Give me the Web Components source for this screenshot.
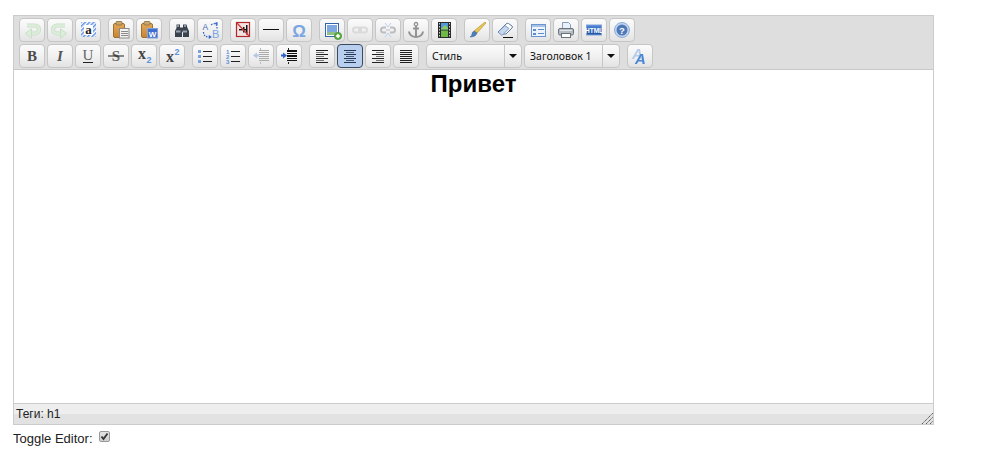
<!DOCTYPE html>
<html lang="ru"><head><meta charset="utf-8"><title>Editor</title>
<style>
html,body{margin:0;background:#fff}
body{padding:15px 0 0 13px;font:12px "Liberation Sans",Arial,sans-serif;color:#222;width:984px;height:446px;box-sizing:border-box;overflow:hidden}
</style></head><body>
<mce-editor>
  <tb-row>
    <tb-group><tb-btn icon="undo"></tb-btn><tb-btn icon="redo"></tb-btn><tb-btn icon="selectall"></tb-btn></tb-group>
    <tb-group><tb-btn icon="paste"></tb-btn><tb-btn icon="pasteword"></tb-btn></tb-group>
    <tb-group><tb-btn icon="find"></tb-btn><tb-btn icon="replace"></tb-btn></tb-group>
    <tb-group><tb-btn icon="nbsp"></tb-btn><tb-btn icon="hr"></tb-btn><tb-btn icon="omega"></tb-btn></tb-group>
    <tb-group><tb-btn icon="image"></tb-btn><tb-btn icon="link"></tb-btn><tb-btn icon="unlink"></tb-btn><tb-btn icon="anchor"></tb-btn><tb-btn icon="media"></tb-btn></tb-group>
    <tb-group><tb-btn icon="brush"></tb-btn><tb-btn icon="eraser"></tb-btn></tb-group>
    <tb-group><tb-btn icon="form"></tb-btn><tb-btn icon="print"></tb-btn><tb-btn icon="html"></tb-btn><tb-btn icon="help"></tb-btn></tb-group>
  </tb-row>
  <tb-row>
    <tb-group><tb-btn icon="bold"></tb-btn><tb-btn icon="italic"></tb-btn><tb-btn icon="underline"></tb-btn><tb-btn icon="strike"></tb-btn><tb-btn icon="sub"></tb-btn><tb-btn icon="sup"></tb-btn></tb-group>
    <tb-group><tb-btn icon="ul"></tb-btn><tb-btn icon="ol"></tb-btn><tb-btn icon="outdent"></tb-btn><tb-btn icon="indent"></tb-btn></tb-group>
    <tb-group><tb-btn icon="left"></tb-btn><tb-btn icon="center" active></tb-btn><tb-btn icon="right"></tb-btn><tb-btn icon="justify"></tb-btn></tb-group>
    <tb-group><tb-select>Стиль</tb-select><tb-select>Заголовок 1</tb-select></tb-group>
    <tb-group><tb-btn icon="font"></tb-btn></tb-group>
  </tb-row>
  <h1 slot="content">Привет</h1>
  <span slot="status">Теги: h1</span>
</mce-editor>
<toggle-line>Toggle Editor:</toggle-line>
<script>
const lines=(rows,c='#222')=>rows.map(([x,y,w,col])=>`<rect x="${x}" y="${y}" width="${w}" height="1" fill="${col||c}"/>`).join('');
const rng=(x,w,ys,c)=>lines(ys.map(y=>[x,y,w]),c);
const T=(x,y,s,t,a='')=>`<text x="${x}" y="${y}" font-size="${s}" ${a}>${t}</text>`;
const SERIF='font-family="Liberation Serif,serif"';
const SANS='font-family="Liberation Sans,sans-serif"';
const dots=(x,ys,c='#7aa2dc')=>ys.map(y=>`<rect x="${x}" y="${y}" width="3" height="3" fill="${c}"/>`).join('');
const clip=`<defs><linearGradient id="o" x1="0" y1="0" x2="0" y2="1"><stop offset="0" stop-color="#e2a95a"/><stop offset="1" stop-color="#c98432"/></linearGradient></defs><rect x="2.500" y="3.500" width="11" height="14" rx="1.500" fill="url(#o)" stroke="#a0702f"/><rect x="5" y="1.500" width="6" height="3.500" rx="1" fill="#c9a773" stroke="#8a6a3a" stroke-width=".8"/>`;
const curve=`<path d="M5 5.500h8a4 4 0 0 1 0 8H8" fill="none" stroke="#c8e0c8" stroke-width="4.200"/><path d="M5 5.500h8a4 4 0 0 1 0 8H8" fill="none" stroke="#dcedd9" stroke-width="2.600"/><path d="M9.500 8.800v9.400L3.300 13.500z" fill="#dcedd9" stroke="#c8e0c8"/>`;
const ICONS={
undo:curve,
redo:`<g transform="matrix(-1 0 0 1 20 0)">${curve}</g>`,
selectall:`<defs><pattern id="h" width="3" height="3" patternUnits="userSpaceOnUse" patternTransform="rotate(45)"><rect width="3" height="3" fill="#fff"/><rect width="1.500" height="3" fill="#5c8fe6"/></pattern></defs><rect x="3" y="2" width="15" height="15" fill="url(#h)"/><rect x="6" y="5" width="9" height="10" fill="#fff"/>`+T(10.5,14,13,'a',SERIF+' font-weight="bold" text-anchor="middle" fill="#222"'),
paste:clip+`<rect x="8.500" y="8.500" width="9.500" height="9.500" fill="#f2f2f0" stroke="#8b8b8b"/>`+rng(10,7,[11,13,15],'#8a8a8a'),
pasteword:clip+`<rect x="8.500" y="8.500" width="10" height="9.500" fill="#3e6fd0" stroke="#86a0d8"/>`+T(13.5,16.500,8,'W',SANS+' font-weight="bold" text-anchor="middle" fill="#fff"'),
find:`<path d="M4.500 4.500h3.500v3h3v-3h3.500l1 3.500 1.500 3v6h-6v-5h-1v5H3v-6l1.500-3z" fill="#39434d"/><rect x="4" y="10.500" width="4.500" height="2" fill="#98a4b0"/><rect x="10.500" y="10.500" width="4.500" height="2" fill="#98a4b0"/><rect x="5" y="5" width="2" height="2" fill="#8b97a3"/><rect x="12" y="5" width="2" height="2" fill="#8b97a3"/>`,
replace:T(2.500,10,8.500,'A',SANS+' fill="#3f68b4"')+T(12,18,11,'B',SANS+' fill="#7ba4e0"')+`<path d="M11 5q4-3 6 1v3M3.500 12q0 5 6 5" fill="none" stroke="#2f62c8" stroke-width="1.200" stroke-dasharray="1.500 1.200"/><path d="M14.500 3l3-1v3.500zM8.800 15l3 2-3 2z" fill="#2f62c8"/>`,
nbsp:`<rect x="3.500" y="2.500" width="13" height="14" fill="#f3e2e2" stroke="#b02a2a" stroke-width="1.200"/><rect x="6" y="9" width="8" height="1.400" fill="#111"/><rect x="10" y="7" width="1.500" height="5.500" fill="#111"/><rect x="13" y="5" width="1.500" height="9.500" fill="#111"/><path d="M4 3l12 13" stroke="#cc3a3e" stroke-width="1.300"/>`,
hr:`<rect x="2" y="9" width="16" height="1" fill="#111"/>`,
omega:T(10,16.500,17,'Ω',SANS+' font-weight="bold" text-anchor="middle" fill="#7aa6e2"'),
image:`<rect x="3.500" y="3.500" width="13" height="13" fill="#fff" stroke="#3564a8"/><rect x="5" y="5" width="10" height="7" fill="#7fa8e0"/><rect x="5" y="12" width="10" height="3" fill="#8fc08a"/><circle cx="16" cy="16" r="3.600" fill="#5fae45" stroke="#3f8a2e" stroke-width=".7"/><path d="M14 16h4M16 14v4" stroke="#fff" stroke-width="1.400"/>`,
link:`<g fill="none" stroke="#dadada" stroke-width="2"><rect x="3" y="7.500" width="8" height="5" rx="2.500"/><rect x="9" y="7.500" width="8" height="5" rx="2.500"/></g>`,
unlink:`<g fill="none" stroke="#bcbcc4" stroke-width="2"><path d="M8 7.500H5.500a2.500 2.500 0 0 0 0 5H8M12 7.500h2.500a2.500 2.500 0 0 1 0 5H12"/></g><path d="M7 3l3 4 3-4M7 17l3-4 3 4" fill="none" stroke="#bcd0ee"/><path d="M8 10h4" stroke="#bcbcc4"/>`,
anchor:`<g fill="none" stroke="#939393" stroke-width="2"><circle cx="10" cy="4.200" r="1.700" stroke-width="1.300"/><path d="M10 6v11M7 8.500h6"/><path d="M3 11.500q.5 5 7 5.500 6.500-.5 7-5.500"/></g>`,
media:`<rect x="4" y="2" width="13" height="16" fill="#2a2a2a"/><rect x="7" y="3" width="7" height="6.500" fill="#4f9ad8"/><rect x="7" y="10.500" width="7" height="6.500" fill="#6fb84a"/><path d="M7 9l4-4 3 3v1.500H7z" fill="#8acb62"/>`+[3,6,9,12,15].map(y=>`<rect x="5" y="${y}" width="1" height="1.500" fill="#ccc"/><rect x="15" y="${y}" width="1" height="1.500" fill="#ccc"/>`).join(''),
brush:`<path d="M18 2l1 1-9 10-3-2z" fill="#e8c455" stroke="#b08f2a" stroke-width=".6"/><path d="M7 11l3 2q-1 4-7 4 2-1 2-3t2-3z" fill="#4d7fb8" stroke="#39608e" stroke-width=".5"/>`,
eraser:`<path d="M3 12l8-8q1-1 2.500-.5l3.500 2.500q1 1 0 2l-6 6H7z" fill="#fff" stroke="#5d7ca6"/><path d="M3 12l4 3.500 7-7-4-3z" fill="#c4d8f0" stroke="#5d7ca6" stroke-width=".7"/><rect x="8" y="17" width="10" height="1" fill="#111"/>`,
form:`<rect x="3.500" y="4.500" width="14" height="12" fill="#eef4fc" stroke="#6b93cc"/><rect x="4" y="5" width="13" height="2" fill="#a6c2e8"/><rect x="5" y="9" width="3" height="2" fill="#5e8ccb"/><rect x="5" y="13" width="3" height="2" fill="#5e8ccb"/><rect x="10" y="9" width="6" height="1" fill="#5e8ccb"/><rect x="10" y="13" width="6" height="1" fill="#5e8ccb"/>`,
print:`<path d="M6.500 2.500h6l2 2v5h-8z" fill="#e8f0fb" stroke="#8a9cb6"/><rect x="2.500" y="8.500" width="15" height="6.500" rx="1.500" fill="#b6bcc4" stroke="#6a727c"/><rect x="5.500" y="13.500" width="9" height="4" fill="#fff" stroke="#6a727c"/><rect x="4" y="10" width="12" height="1" fill="#e3e6ea"/>`,
html:`<defs><linearGradient id="b" x1="0" y1="0" x2="0" y2="1"><stop offset="0" stop-color="#4f86d8"/><stop offset="1" stop-color="#1f4f9f"/></linearGradient></defs><rect x="2.500" y="5" width="15" height="10" fill="url(#b)" stroke="#7ea2d8"/>`+T(10,12.500,6.500,'HTML',SANS+' font-weight="bold" text-anchor="middle" fill="#fff"'),
help:`<circle cx="10" cy="10" r="7.500" fill="#c4d6ef" stroke="#8facd6"/><circle cx="10" cy="10" r="5.500" fill="#4f78b8"/>`+T(10,13.500,9.500,'?',SANS+' font-weight="bold" text-anchor="middle" fill="#fff"'),
bold:T(10,15,15,'B',SERIF+' font-weight="bold" text-anchor="middle" fill="#4a4a4a"'),
italic:T(10,15,15,'I',SERIF+' font-weight="bold" font-style="italic" text-anchor="middle" fill="#555"'),
underline:T(10,14,15,'U',SERIF+' text-anchor="middle" fill="#666"')+`<rect x="5" y="16" width="10" height="1" fill="#222"/>`,
strike:T(10,15,15,'S',SERIF+' font-weight="bold" text-anchor="middle" fill="#666"')+`<rect x="2" y="9.500" width="16" height="1" fill="#222"/>`,
sub:T(8,13,16,'x',SERIF+' font-weight="bold" text-anchor="middle" fill="#444"')+T(15,17,9,'2',SANS+' font-weight="bold" text-anchor="middle" fill="#5b93dc"'),
sup:T(8,16,16,'x',SERIF+' font-weight="bold" text-anchor="middle" fill="#444"')+T(15,9,9,'2',SANS+' font-weight="bold" text-anchor="middle" fill="#5b93dc"'),
ul:dots(3,[4,9,14])+rng(8,9,[5,10,15]),
ol:T(3,8,6,'1',SANS+' font-weight="bold" fill="#5b8fd8"')+T(3,13,6,'2',SANS+' font-weight="bold" fill="#5b8fd8"')+T(3,18,6,'3',SANS+' font-weight="bold" fill="#5b8fd8"')+rng(8,9,[5,10,15]),
outdent:`<path d="M2 9.500l4-3v2h2v2H6v2z" fill="#b4c8e4"/>`+rng(8,10,[4,6,8,10,12,14],'#aaa')+rng(9,1,[2,3,16,17],'#bbb'),
indent:`<path d="M8 9.500l-4-3v2H2v2h2v2z" fill="#2f62c8"/>`+`<rect x="8" y="4" width="10" height="2" fill="#111"/><rect x="8" y="7" width="10" height="1" fill="#111"/><rect x="8" y="9" width="10" height="2" fill="#111"/><rect x="8" y="12" width="10" height="1" fill="#111"/><rect x="8" y="14" width="10" height="1" fill="#111"/>`+rng(9,1,[2,3,16,17],'#222'),
left:rng(4,12,[4,8,12,16],'#222')+rng(4,8,[6,10,14],'#777'),
center:rng(4,12,[4,8,12,16],'#24364f')+rng(6,8,[6,10,14],'#4a5d78'),
right:rng(4,12,[4,8,12,16],'#222')+rng(8,8,[6,10,14],'#777'),
justify:rng(4,12,[4,6,8,10,12,14,16],'#222'),
font:`<text x="5" y="18" font-size="15" ${SANS} font-weight="bold" font-style="italic" fill="#4a86d4" style="filter:drop-shadow(-3px -5px 0 #b4cbea)">A</text>`
};
const simple=(name,css)=>customElements.define(name,class extends HTMLElement{constructor(){super();this.attachShadow({mode:'open'}).innerHTML=`<style>${css}</style><slot></slot>`}});
simple('tb-row',':host{display:flex;height:26px;padding-left:5px}');
simple('tb-group',':host{display:flex;gap:2px;margin-right:7px}');
customElements.define('tb-btn',class extends HTMLElement{connectedCallback(){
 if(this.shadowRoot)return;
 this.attachShadow({mode:'open'}).innerHTML=`<style>
 :host{display:flex;align-items:center;justify-content:center;box-sizing:border-box;width:26px;height:24px;border:1px solid #c6c6c6;border-radius:4px;background:linear-gradient(#fbfbfb,#f1f1f1 50%,#e3e3e3)}
 :host([active]){background:#b8cff0;border-color:#3b4a5e}
 svg{display:block;width:20px;height:20px;flex:none;overflow:visible}
 </style><svg viewBox="0 0 20 20" aria-hidden="true">${ICONS[this.getAttribute('icon')]||''}</svg>`;
}});
customElements.define('tb-select',class extends HTMLElement{constructor(){super();this.attachShadow({mode:'open'}).innerHTML=`<style>
 :host{display:flex;box-sizing:border-box;width:96px;height:24px;border:1px solid #c6c6c6;border-radius:4px;background:linear-gradient(#fbfbfb,#f1f1f1 50%,#e3e3e3);font:10.5px "Noto Sans","Liberation Sans",sans-serif;color:#111}
 .t{flex:1;display:flex;align-items:center;padding-left:5px;min-width:0;white-space:nowrap}
 .a{width:16px;border-left:1px solid #c6c6c6;display:flex;align-items:center;justify-content:center}
 .a i{border:4px solid transparent;border-top:4px solid #111;border-bottom:0;display:block}
 </style><div class="t"><slot></slot></div><div class="a"><i></i></div>`}});
customElements.define('mce-editor',class extends HTMLElement{constructor(){super();this.attachShadow({mode:'open'}).innerHTML=`<style>
 :host{display:flex;flex-direction:column;box-sizing:border-box;width:921px;height:410px;border:1px solid #ccc;font:12px "Liberation Sans",sans-serif}
 .tb{background:#dedede;padding-top:2px;height:54px;box-sizing:border-box;border-bottom:1px solid #c8c8c8;flex:none}
 .body{flex:1;background:#fff;min-height:0}
 .st{height:21px;flex:none;box-sizing:border-box;border-top:1px solid #ccc;background:linear-gradient(#eeeeee 0 50%,#e2e2e2 50%);display:flex;align-items:center;padding-left:2px;position:relative;color:#222}
 ::slotted(h1){margin:0;text-align:center;font:bold 24px/27px "Liberation Sans",sans-serif;color:#000}
 svg{position:absolute;right:0;bottom:0}
 </style><div class="tb"><slot></slot></div><div class="body"><slot name="content"></slot></div><div class="st"><slot name="status"></slot><svg width="12" height="12" viewBox="0 0 12 12"><path d="M1 12L12 1M5 12l7-7M9 12l3-3" stroke="#555" stroke-width="1" stroke-dasharray="1.500 .5" fill="none"/></svg></div>`}});
customElements.define('toggle-line',class extends HTMLElement{constructor(){super();this.attachShadow({mode:'open'}).innerHTML=`<style>
 :host{display:flex;align-items:flex-start;height:26px;padding-top:6px;box-sizing:border-box;font:13px/15px "Liberation Sans",sans-serif;color:#222;gap:6px}
 .c{width:11px;height:11px;box-sizing:border-box;border:1px solid #999;border-radius:2px;background:linear-gradient(#e4e4e4,#cfcfcf);display:block}
 .c svg{display:block}
 </style><slot></slot><span class="c" role="checkbox" aria-checked="true"><svg width="9" height="9" viewBox="0 0 9 9"><path d="M1.500 4.500l2 2.500 4-5.500" fill="none" stroke="#333" stroke-width="1.800"/></svg></span>`}});
</script>
</body></html>
